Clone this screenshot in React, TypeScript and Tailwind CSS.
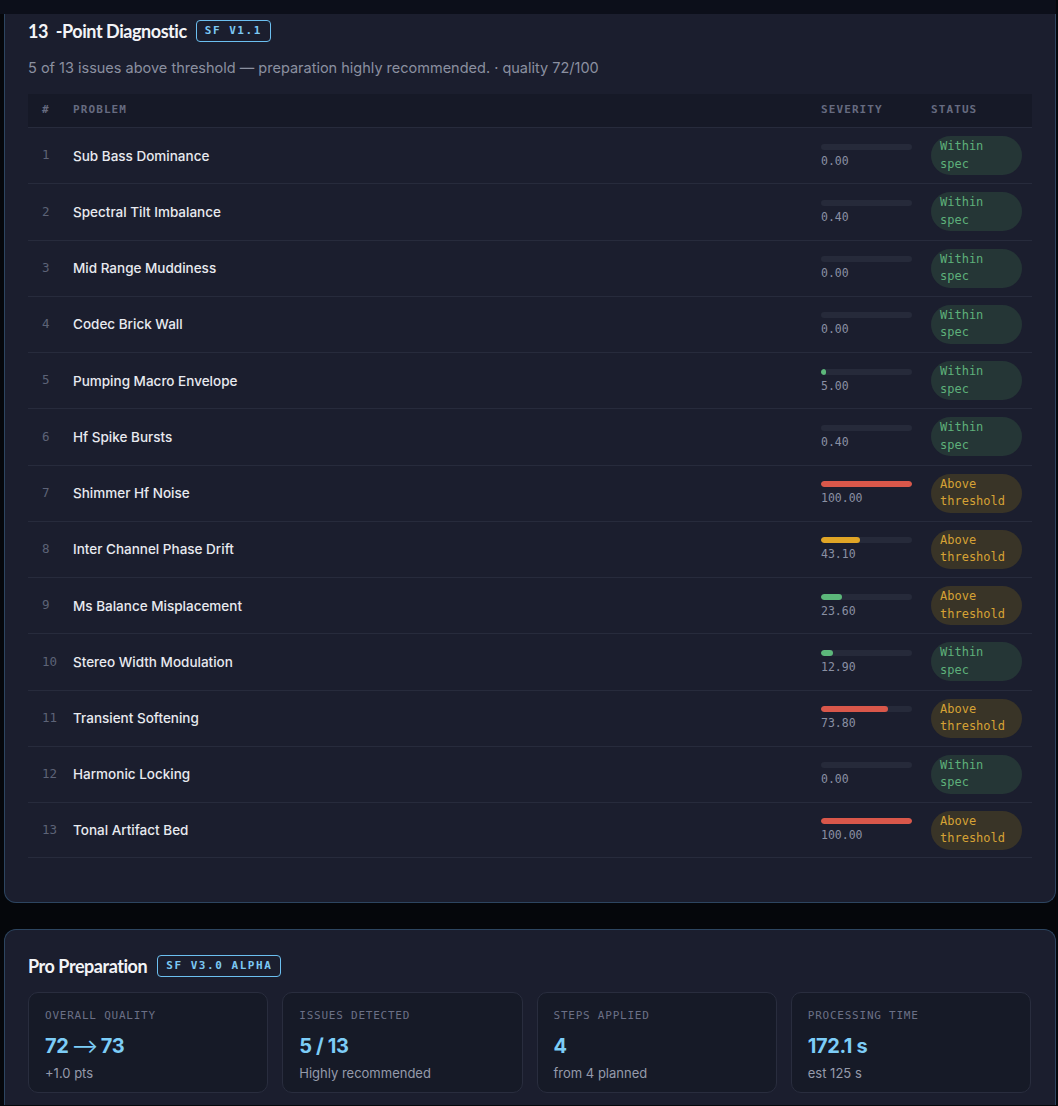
import React from "react";

interface Check {
  name: string;
  severity: number;
  above: boolean;
}

const checks: Check[] = [
  { name: "Sub Bass Dominance", severity: 0, above: false },
  { name: "Spectral Tilt Imbalance", severity: 0.4, above: false },
  { name: "Mid Range Muddiness", severity: 0, above: false },
  { name: "Codec Brick Wall", severity: 0, above: false },
  { name: "Pumping Macro Envelope", severity: 5, above: false },
  { name: "Hf Spike Bursts", severity: 0.4, above: false },
  { name: "Shimmer Hf Noise", severity: 100, above: true },
  { name: "Inter Channel Phase Drift", severity: 43.1, above: true },
  { name: "Ms Balance Misplacement", severity: 23.6, above: true },
  { name: "Stereo Width Modulation", severity: 12.9, above: false },
  { name: "Transient Softening", severity: 73.8, above: true },
  { name: "Harmonic Locking", severity: 0, above: false },
  { name: "Tonal Artifact Bed", severity: 100, above: true },
];

const stats = [
  { label: "Overall quality", value: ["72", "73"], sub: "+1.0 pts" },
  { label: "Issues detected", value: "5 / 13", sub: "Highly recommended" },
  { label: "Steps applied", value: "4", sub: "from 4 planned" },
  { label: "Processing time", value: "172.1 s", sub: "est 125 s" },
];

const mono = "font-['DejaVu_Sans_Mono','Liberation_Mono',monospace]";
const sans = "font-['Inter','Noto_Sans',sans-serif]";
const heading = "font-['Lato','Inter',sans-serif]";

function barColor(v: number) {
  if (v >= 70) return "bg-[#d9574a]";
  if (v >= 30) return "bg-[#e0a526]";
  return "bg-[#5cb77a]";
}

function Badge({ children }: { children: React.ReactNode }) {
  return (
    <span
      className={`${mono} inline-flex h-[22px] items-center rounded-[4px] border border-[#6cbff0] px-[8px] text-[11px] font-bold uppercase tracking-[0.14em] text-[#7cc8f4]`}>
      {children}
    </span>
  );
}

function SeverityCell({ value }: { value: number }) {
  return (
    <div className="flex flex-col gap-[4px] pr-[19px]">
      <div className="h-[6px] w-full overflow-hidden rounded-full bg-[#262a3a]">
        {value > 0.5 && (
          <div
            className={`h-full rounded-full ${barColor(value)}`}
            style={{ width: `${Math.max(value, 5)}%` }}
          />
        )}
      </div>
      <span className={`${mono} text-[11.5px] leading-[14px] text-[#8a90a3]`}>
        {value.toFixed(2)}
      </span>
    </div>
  );
}

function StatusPill({ above }: { above: boolean }) {
  return (
    <span
      className={`${mono} block w-[91px] rounded-full py-[2px] pl-[9px] text-[12px] leading-[17.5px] ${
        above
          ? "bg-[#393427] text-[#d6a235]"
          : "bg-[#253636] text-[#5eb07a]"
      }`}>
      {above ? (
        <>
          Above
          <br />
          threshold
        </>
      ) : (
        <>
          Within
          <br />
          spec
        </>
      )}
    </span>
  );
}

export default function App() {
  const aboveCount = checks.filter((c) => c.above).length;

  return (
    <div className={`${sans} min-h-screen bg-[#05070b] pr-[2px]`}>
      <div className="h-[14px] bg-[#0c0f1a]" />

      {/* Diagnostic card */}
      <div className="ml-[4px] rounded-b-[12px] border border-t-0 border-[#2d4560] bg-[#1b1e2e] px-[23px] pb-[44px] pt-[6px]">
        <div className="flex h-[22px] items-center gap-[9px]">
          <h2
            className={`${heading} whitespace-pre text-[18px] font-bold tracking-[-0.025em] text-[#f3f4f7]`}>
            {"13  -Point Diagnostic"}
          </h2>
          <Badge>SF v1.1</Badge>
        </div>
        <p className="mt-[17px] text-[14.5px] leading-[18px] text-[#8b90a0]">
          {aboveCount} of 13 issues above threshold — preparation highly
          recommended. · quality 72/100
        </p>

        <div className="mt-[17px]">
          <div
            className={`${mono} grid h-[33px] grid-cols-[45px_1fr_110px_101px] items-center bg-[#161927] text-[11px] font-bold uppercase tracking-[0.1em] text-[#666b80]`}>
            <span className="pl-[14px]">#</span>
            <span>Problem</span>
            <span>Severity</span>
            <span>Status</span>
          </div>
          {checks.map((c, i) => (
            <div
              key={c.name}
              className="grid h-[56.25px] grid-cols-[45px_1fr_110px_101px] items-center border-t border-[#272b3c] last:border-b">
              <span
                className={`${mono} pl-[14px] text-[12.5px] text-[#5d6377]`}>
                {i + 1}
              </span>
              <span className="text-[13.5px] font-medium text-[#e8eaf0]">
                {c.name}
              </span>
              <SeverityCell value={c.severity} />
              <StatusPill above={c.above} />
            </div>
          ))}
        </div>
      </div>

      {/* Preparation summary card */}
      <div className="ml-[4px] mt-[26px] rounded-t-[12px] border border-b-0 border-[#2d4560] bg-[#1b1e2e] px-[23px] pb-[12px] pt-[25px]">
        <div className="flex h-[22px] items-center gap-[10px]">
          <h2
            className={`${heading} text-[18px] font-bold tracking-[-0.025em] text-[#f3f4f7]`}>
            Pro Preparation
          </h2>
          <Badge>SF v3.0 alpha</Badge>
        </div>
        <div className="mt-[15px] grid grid-cols-4 gap-[14px] pr-[1px]">
          {stats.map((s) => (
            <div
              key={s.label}
              className="h-[101px] rounded-[10px] border border-[#292d3e] bg-[#161a27] px-[16px] pt-[15px]">
              <div
                className={`${mono} text-[11px] uppercase tracking-[0.07em] text-[#6b7086]`}>
                {s.label}
              </div>
              <div className="mt-[9px] text-[20px] font-bold leading-[24px] tracking-[-0.02em] text-[#7dcdf7]">
                {Array.isArray(s.value) ? (
                  <>
                    {s.value[0]}
                    <span className="mx-[3px] font-normal">⟶</span>
                    {s.value[1]}
                  </>
                ) : (
                  s.value
                )}
              </div>
              <div className="mt-[6px] text-[13px] text-[#959bab]">{s.sub}</div>
            </div>
          ))}
        </div>
      </div>
    </div>
  );
}
